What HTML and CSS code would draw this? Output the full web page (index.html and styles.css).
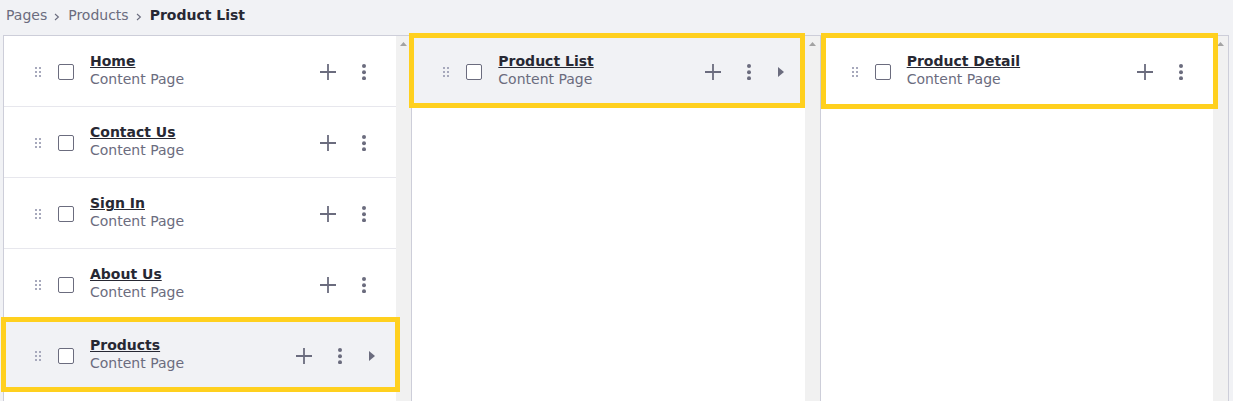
FILE: index.html
```html
<!DOCTYPE html>
<html lang="en">
<head>
<meta charset="utf-8">
<title>Product List</title>
<link rel="stylesheet" href="styles.css">
</head>
<body>
<nav class="crumbs">
  <span class="crumb">Pages</span>
  <svg class="chev" width="6" height="8" viewBox="0 0 6 8"><path d="M1 1 L4.4 4 L1 7" fill="none" stroke="currentColor" stroke-width="1.1"/></svg>
  <span class="crumb">Products</span>
  <svg class="chev" width="6" height="8" viewBox="0 0 6 8"><path d="M1 1 L4.4 4 L1 7" fill="none" stroke="currentColor" stroke-width="1.1"/></svg>
  <span class="crumb current">Product List</span>
</nav>

<div class="columns">
  <section class="col">
    <ul class="list">
      <li class="row">
        <svg class="drag" width="6" height="10" viewBox="0 0 6 10"><rect x="0" y="0" width="2" height="2"/><rect x="4" y="0" width="2" height="2"/><rect x="0" y="4" width="2" height="2"/><rect x="4" y="4" width="2" height="2"/><rect x="0" y="8" width="2" height="2"/><rect x="4" y="8" width="2" height="2"/></svg>
        <span class="check"></span>
        <div class="text"><a class="title" href="#">Home</a><span class="sub">Content Page</span></div>
        <div class="actions">
          <span class="act"><svg width="16" height="16" viewBox="0 0 16 16"><path d="M8 0 V16 M0 8 H16" stroke="currentColor" stroke-width="1.8"/></svg></span>
          <span class="act"><svg width="4" height="16" viewBox="0 0 4 16"><circle cx="2" cy="2" r="2"/><circle cx="2" cy="8.3" r="2"/><circle cx="2" cy="14.3" r="2"/></svg></span>
        </div>
      </li>
      <li class="row">
        <svg class="drag" width="6" height="10" viewBox="0 0 6 10"><rect x="0" y="0" width="2" height="2"/><rect x="4" y="0" width="2" height="2"/><rect x="0" y="4" width="2" height="2"/><rect x="4" y="4" width="2" height="2"/><rect x="0" y="8" width="2" height="2"/><rect x="4" y="8" width="2" height="2"/></svg>
        <span class="check"></span>
        <div class="text"><a class="title" href="#">Contact Us</a><span class="sub">Content Page</span></div>
        <div class="actions">
          <span class="act"><svg width="16" height="16" viewBox="0 0 16 16"><path d="M8 0 V16 M0 8 H16" stroke="currentColor" stroke-width="1.8"/></svg></span>
          <span class="act"><svg width="4" height="16" viewBox="0 0 4 16"><circle cx="2" cy="2" r="2"/><circle cx="2" cy="8.3" r="2"/><circle cx="2" cy="14.3" r="2"/></svg></span>
        </div>
      </li>
      <li class="row">
        <svg class="drag" width="6" height="10" viewBox="0 0 6 10"><rect x="0" y="0" width="2" height="2"/><rect x="4" y="0" width="2" height="2"/><rect x="0" y="4" width="2" height="2"/><rect x="4" y="4" width="2" height="2"/><rect x="0" y="8" width="2" height="2"/><rect x="4" y="8" width="2" height="2"/></svg>
        <span class="check"></span>
        <div class="text"><a class="title" href="#">Sign In</a><span class="sub">Content Page</span></div>
        <div class="actions">
          <span class="act"><svg width="16" height="16" viewBox="0 0 16 16"><path d="M8 0 V16 M0 8 H16" stroke="currentColor" stroke-width="1.8"/></svg></span>
          <span class="act"><svg width="4" height="16" viewBox="0 0 4 16"><circle cx="2" cy="2" r="2"/><circle cx="2" cy="8.3" r="2"/><circle cx="2" cy="14.3" r="2"/></svg></span>
        </div>
      </li>
      <li class="row">
        <svg class="drag" width="6" height="10" viewBox="0 0 6 10"><rect x="0" y="0" width="2" height="2"/><rect x="4" y="0" width="2" height="2"/><rect x="0" y="4" width="2" height="2"/><rect x="4" y="4" width="2" height="2"/><rect x="0" y="8" width="2" height="2"/><rect x="4" y="8" width="2" height="2"/></svg>
        <span class="check"></span>
        <div class="text"><a class="title" href="#">About Us</a><span class="sub">Content Page</span></div>
        <div class="actions">
          <span class="act"><svg width="16" height="16" viewBox="0 0 16 16"><path d="M8 0 V16 M0 8 H16" stroke="currentColor" stroke-width="1.8"/></svg></span>
          <span class="act"><svg width="4" height="16" viewBox="0 0 4 16"><circle cx="2" cy="2" r="2"/><circle cx="2" cy="8.3" r="2"/><circle cx="2" cy="14.3" r="2"/></svg></span>
        </div>
      </li>
      <li class="row active">
        <svg class="drag" width="6" height="10" viewBox="0 0 6 10"><rect x="0" y="0" width="2" height="2"/><rect x="4" y="0" width="2" height="2"/><rect x="0" y="4" width="2" height="2"/><rect x="4" y="4" width="2" height="2"/><rect x="0" y="8" width="2" height="2"/><rect x="4" y="8" width="2" height="2"/></svg>
        <span class="check"></span>
        <div class="text"><a class="title" href="#">Products</a><span class="sub">Content Page</span></div>
        <div class="actions">
          <span class="act"><svg width="16" height="16" viewBox="0 0 16 16"><path d="M8 0 V16 M0 8 H16" stroke="currentColor" stroke-width="1.8"/></svg></span>
          <span class="act"><svg width="4" height="16" viewBox="0 0 4 16"><circle cx="2" cy="2" r="2"/><circle cx="2" cy="8.3" r="2"/><circle cx="2" cy="14.3" r="2"/></svg></span>
          <span class="caret"><svg width="6" height="10" viewBox="0 0 6 10"><path d="M0 0 L6 5 L0 10 Z"/></svg></span>
        </div>
        <span class="hl hl-a"></span>
      </li>
    </ul>
    <div class="sbar"><svg class="sbar-up" width="7" height="4" viewBox="0 0 7 4"><path d="M3.5 0 L7 4 L0 4 Z"/></svg></div>
  </section>

  <section class="col">
    <ul class="list">
      <li class="row active">
        <svg class="drag" width="6" height="10" viewBox="0 0 6 10"><rect x="0" y="0" width="2" height="2"/><rect x="4" y="0" width="2" height="2"/><rect x="0" y="4" width="2" height="2"/><rect x="4" y="4" width="2" height="2"/><rect x="0" y="8" width="2" height="2"/><rect x="4" y="8" width="2" height="2"/></svg>
        <span class="check"></span>
        <div class="text"><a class="title" href="#">Product List</a><span class="sub">Content Page</span></div>
        <div class="actions">
          <span class="act"><svg width="16" height="16" viewBox="0 0 16 16"><path d="M8 0 V16 M0 8 H16" stroke="currentColor" stroke-width="1.8"/></svg></span>
          <span class="act"><svg width="4" height="16" viewBox="0 0 4 16"><circle cx="2" cy="2" r="2"/><circle cx="2" cy="8.3" r="2"/><circle cx="2" cy="14.3" r="2"/></svg></span>
          <span class="caret"><svg width="6" height="10" viewBox="0 0 6 10"><path d="M0 0 L6 5 L0 10 Z"/></svg></span>
        </div>
        <span class="hl hl-b"></span>
      </li>
    </ul>
    <div class="sbar"><svg class="sbar-up" width="7" height="4" viewBox="0 0 7 4"><path d="M3.5 0 L7 4 L0 4 Z"/></svg></div>
  </section>

  <section class="col">
    <ul class="list">
      <li class="row">
        <svg class="drag" width="6" height="10" viewBox="0 0 6 10"><rect x="0" y="0" width="2" height="2"/><rect x="4" y="0" width="2" height="2"/><rect x="0" y="4" width="2" height="2"/><rect x="4" y="4" width="2" height="2"/><rect x="0" y="8" width="2" height="2"/><rect x="4" y="8" width="2" height="2"/></svg>
        <span class="check"></span>
        <div class="text"><a class="title" href="#">Product Detail</a><span class="sub">Content Page</span></div>
        <div class="actions">
          <span class="act"><svg width="16" height="16" viewBox="0 0 16 16"><path d="M8 0 V16 M0 8 H16" stroke="currentColor" stroke-width="1.8"/></svg></span>
          <span class="act"><svg width="4" height="16" viewBox="0 0 4 16"><circle cx="2" cy="2" r="2"/><circle cx="2" cy="8.3" r="2"/><circle cx="2" cy="14.3" r="2"/></svg></span>
        </div>
        <span class="hl hl-c"></span>
      </li>
    </ul>
    <div class="sbar"><svg class="sbar-up" width="7" height="4" viewBox="0 0 7 4"><path d="M3.5 0 L7 4 L0 4 Z"/></svg></div>
  </section>
</div>
</body>
</html>
```

FILE: styles.css
```css
html, body {
  margin: 0;
  padding: 0;
}

body {
  background: #f1f2f5;
  font-family: "DejaVu Sans", "Noto Sans", sans-serif;
  font-size: 14px;
  color: #272833;
  height: 401px;
  overflow: hidden;
}

/* breadcrumb */
.crumbs {
  display: flex;
  align-items: flex-start;
  height: 35px;
  box-sizing: border-box;
  padding: 7px 0 0 6px;
  line-height: 16px;
  color: #6b6c7e;
}

.crumb.current {
  font-weight: bold;
  color: #272833;
}

.chev {
  flex: none;
  margin: 6px 8px 0 7px;
  color: #6b6c7e;
}

/* columns */
.columns {
  display: flex;
  width: 1226px;
  height: 366px;
  margin-left: 3px;
  box-sizing: border-box;
  border-top: 1px solid #cdced9;
  border-right: 1px solid #cdced9;
}

.col {
  flex: 1 1 0;
  min-width: 0;
  display: flex;
  background: #fff;
  border-left: 1px solid #cdced9;
}

.list {
  flex: 1 1 auto;
  min-width: 0;
  margin: 0;
  padding: 0;
  list-style: none;
}

.sbar {
  flex: none;
  width: 15px;
  background: #f1f1f1;
  display: flex;
  justify-content: center;
  align-items: flex-start;
}

.sbar-up {
  margin-top: 6px;
  fill: #a3a3a3;
}

/* rows */
.row {
  position: relative;
  display: flex;
  align-items: center;
  height: 71px;
  box-sizing: border-box;
  padding: 2px 16px 0 31px;
  border-bottom: 1px solid #e7e7ed;
  background: #fff;
}

.row.active {
  background: #f1f2f5;
}

.drag {
  flex: none;
  fill: #a7a9bc;
  margin-right: 17px;
}

.check {
  flex: none;
  width: 16px;
  height: 16px;
  box-sizing: border-box;
  border: 1px solid #6b6c7e;
  border-radius: 2px;
  background: #fff;
  margin-right: 16px;
}

.text {
  flex: 1 1 auto;
  min-width: 0;
  display: flex;
  flex-direction: column;
  align-items: flex-start;
  line-height: 18px;
  margin-bottom: 4px;
}

.title {
  font-weight: bold;
  color: #272833;
  text-decoration: underline;
}

.sub {
  color: #6b6c7e;
}

.actions {
  flex: none;
  display: flex;
  align-items: center;
  gap: 4px;
  color: #6b6c7e;
}

.act {
  width: 32px;
  height: 32px;
  display: flex;
  align-items: center;
  justify-content: center;
  fill: #6b6c7e;
}

.caret {
  width: 16px;
  height: 32px;
  margin-left: 4px;
  display: flex;
  align-items: center;
  justify-content: center;
  fill: #6b6c7e;
}

/* highlight outlines */
.hl {
  position: absolute;
  top: -3px;
  bottom: -2px;
  border: 5px solid #ffd01e;
  z-index: 2;
  pointer-events: none;
}

.hl-a {
  left: -3px;
  right: -4px;
}

.hl-b {
  left: -3px;
  right: 0;
}

.hl-c {
  left: 0;
  right: -5px;
  bottom: -3px;
}
```
